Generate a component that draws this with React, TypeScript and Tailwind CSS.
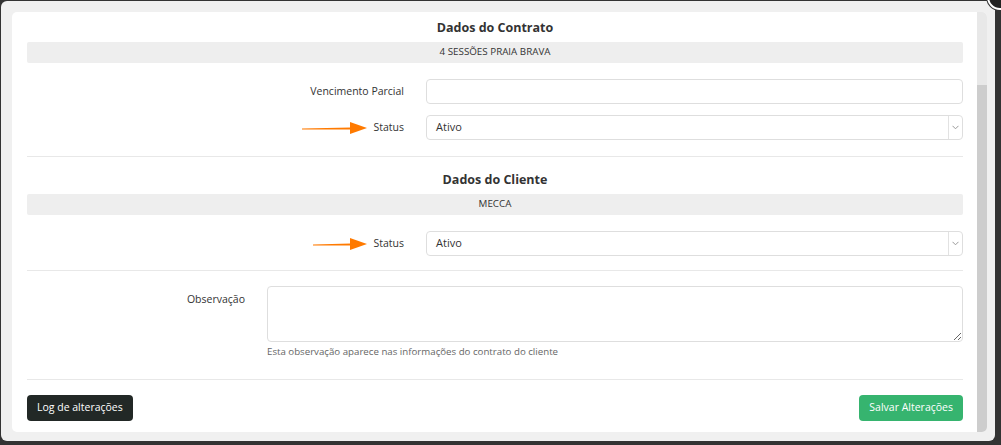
import React from "react";

function Arrow({ width }: { width: number }) {
  return (
    <svg width={width} height="14" viewBox={`0 0 ${width} 14`} className="shrink-0">
      <path d={`M0 7.6 L${width - 16} 6.6 L${width - 16} 8.4 L0 8.6 Z`} fill="#ff7a00" />
      <path d={`M${width - 17} 1 L${width} 7 L${width - 17} 13 Z`} fill="#ff7a00" />
    </svg>
  );
}

function SectionTitle({ title, sub }: { title: string; sub: string }) {
  return (
    <>
      <h3 className="text-center text-[12.5px] font-bold leading-[22px] text-[#333]">{title}</h3>
      <div className="mt-[3px] flex h-[21px] items-center justify-center rounded-[2px] bg-[#eeeeee] text-[9.8px] text-[#333]">
        {sub}
      </div>
    </>
  );
}

function SelectBox({ value }: { value: string }) {
  return (
    <div className="flex h-[25px] flex-1 items-center rounded-[4px] border border-[#dedede] bg-white">
      <span className="flex-1 pl-[9px] text-[11px] text-[#333]">{value}</span>
      <div className="flex h-full w-[14px] items-center justify-center border-l border-[#e2e2e2]">
        <svg width="7" height="5" viewBox="0 0 7 5">
          <path d="M0.5 0.8 L3.5 3.8 L6.5 0.8" fill="none" stroke="#999" strokeWidth="1" />
        </svg>
      </div>
    </div>
  );
}

export default function App() {
  return (
    <div
      className="relative h-[445px] w-[1001px] overflow-hidden bg-[#333333] pl-px pt-px"
      style={{ fontFamily: '"Open Sans", "Liberation Sans", sans-serif' }}
    >
      <div className="h-[440px] w-[994px] rounded-[6px] bg-[#f0f0f0] pl-[11px] pt-[11px]">
        <div className="flex h-[420px] w-[975px] overflow-hidden rounded-[5px] bg-white">
          <div className="flex-1 pl-[15px] pr-[14px] pt-[5px]">
            <SectionTitle title="Dados do Contrato" sub="4 SESSÕES PRAIA BRAVA" />

            <div className="mt-[16px] flex items-center">
              <label className="w-[377px] pt-px text-right text-[10.5px] text-[#333]">Vencimento Parcial</label>
              <div className="ml-[22px] h-[25px] flex-1 rounded-[4px] border border-[#dedede]" />
            </div>
            <div className="mt-[11px] flex items-center">
              <div className="flex w-[377px] items-center justify-end gap-[6px]">
                <Arrow width={65} />
                <label className="text-[10.5px] text-[#333]">Status</label>
              </div>
              <div className="ml-[22px] flex flex-1">
                <SelectBox value="Ativo" />
              </div>
            </div>

            <hr className="mt-[16px] border-[#e8e8e8]" />

            <div className="mt-[12px]">
              <SectionTitle title="Dados do Cliente" sub="MECCA" />
            </div>

            <div className="mt-[16px] flex items-center">
              <div className="flex w-[377px] items-center justify-end gap-[6px]">
                <Arrow width={54} />
                <label className="text-[10.5px] text-[#333]">Status</label>
              </div>
              <div className="ml-[22px] flex flex-1">
                <SelectBox value="Ativo" />
              </div>
            </div>

            <hr className="mt-[14px] border-[#e8e8e8]" />

            <div className="mt-[15px] flex items-start">
              <label className="w-[218px] pt-[6px] text-right text-[10.5px] text-[#333]">Observação</label>
              <div className="ml-[22px] flex-1">
                <textarea className="block h-[56px] w-full resize-y rounded-[4px] border border-[#dedede] outline-none" />
                <p className="mt-[3px] text-[9.7px] leading-[14px] text-[#666]">
                  Esta observação aparece nas informações do contrato do cliente
                </p>
              </div>
            </div>

            <hr className="mt-[20px] border-[#e8e8e8]" />

            <div className="mt-[15px] flex items-center justify-between">
              <button className="h-[26px] rounded-[4px] bg-[#222826] px-[10px] text-[10.5px] text-white">
                Log de alterações
              </button>
              <button className="h-[26px] rounded-[4px] bg-[#36b46f] px-[10px] text-[10.5px] text-white">
                Salvar Alterações
              </button>
            </div>
          </div>
          <div className="flex w-[10px] flex-col">
            <div className="h-[73px] bg-[#e8e8e8]" />
            <div className="flex-1 bg-[#cdcdcd]" />
          </div>
        </div>
      </div>
      <div className="absolute left-[987px] top-[-16px] h-[26px] w-[26px] rounded-full border-2 border-white bg-[#222] shadow-[0_0_0_1px_#333]" />
    </div>
  );
}
